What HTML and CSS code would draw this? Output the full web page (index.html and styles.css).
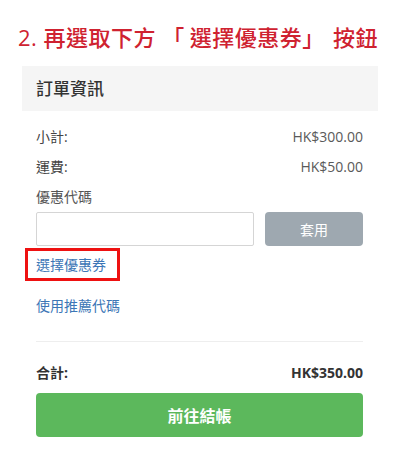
FILE: index.html
```html
<!DOCTYPE html>
<html lang="zh-Hant">
<head>
<meta charset="utf-8">
<link rel="stylesheet" href="styles.css">
</head>
<body>
<h1 class="step-title">2. 再選取下方 <span class="quote-open">「</span>選擇優惠券<span class="quote-close">」</span> 按鈕</h1>
<section class="card">
  <div class="card-header">訂單資訊</div>
  <div class="card-body">
    <div class="row"><span class="label">小計:</span><span class="value">HK$300.00</span></div>
    <div class="row"><span class="label">運費:</span><span class="value">HK$50.00</span></div>
    <div class="coupon-label">優惠代碼</div>
    <div class="coupon-form">
      <input class="coupon-input" type="text">
      <button class="apply-btn" type="button">套用</button>
    </div>
    <div class="coupon-link"><a class="link highlight" href="#">選擇優惠券</a></div>
    <div class="referral-link"><a class="link" href="#">使用推薦代碼</a></div>
    <hr class="divider">
    <div class="row total"><span class="label">合計:</span><span class="value">HK$350.00</span></div>
    <button class="checkout-btn" type="button">前往結帳</button>
  </div>
</section>
</body>
</html>
```
FILE: styles.css
```css
* { box-sizing: border-box; }
body {
  margin: 0;
  width: 400px;
  font-family: "Open Sans", "Noto Sans CJK TC", sans-serif;
  font-size: 14px;
  color: #333;
  background: #fff;
}
.step-title {
  margin: 0;
  padding: 22px 0 0 18px;
  height: 66px;
  font-size: 22px;
  line-height: 30px;
  font-weight: 500;
  color: #cf2230;
  letter-spacing: 0.5px;
  white-space: nowrap;
}
.quote-open { margin-right: 5px; }
.quote-close { margin-right: 2px; }
.card {
  margin: 0 22px;
}
.card-header {
  height: 45px;
  background: #f5f5f5;
  padding-left: 14px;
  font-size: 17px;
  line-height: 45px;
  font-weight: 500;
  color: #333;
}
.card-body {
  padding: 11px 15px 0 14px;
}
.row {
  display: flex;
  justify-content: space-between;
  font-size: 14px;
  line-height: 30px;
}
.row .label { color: #444; }
.row .value { color: #5a5a5a; }
.coupon-label {
  font-size: 14px;
  line-height: 30px;
  color: #555;
}
.coupon-form {
  display: flex;
  gap: 11px;
}
.coupon-input {
  flex: 1;
  height: 34px;
  border: 1px solid #d5d5d5;
  border-radius: 2px;
  margin: 0;
  font: inherit;
}
.apply-btn {
  width: 98px;
  height: 34px;
  border: none;
  border-radius: 4px;
  background: #9ea8b0;
  color: #fff;
  font: inherit;
  font-size: 14px;
}
.link {
  color: #3c76b6;
  text-decoration: none;
}
.coupon-link {
  margin-top: 8px;
  font-size: 14px;
  line-height: 22px;
}
.highlight {
  position: relative;
}
.highlight::after {
  content: "";
  position: absolute;
  left: -11px;
  right: -14px;
  top: -7px;
  bottom: -7px;
  border: 3px solid #ee1111;
}
.referral-link {
  margin-top: 19px;
  font-size: 14px;
  line-height: 22px;
}
.divider {
  margin: 24px 0 0;
  border: none;
  border-top: 1px solid #eee;
}
.row.total {
  margin-top: 16px;
  font-weight: 700;
}
.row.total .label, .row.total .value { color: #333; }
.checkout-btn {
  display: block;
  width: 100%;
  height: 44px;
  margin-top: 5px;
  border: none;
  border-radius: 4px;
  background: #5cb85c;
  color: #fff;
  font: inherit;
  font-size: 16px;
  font-weight: 700;
}
```
